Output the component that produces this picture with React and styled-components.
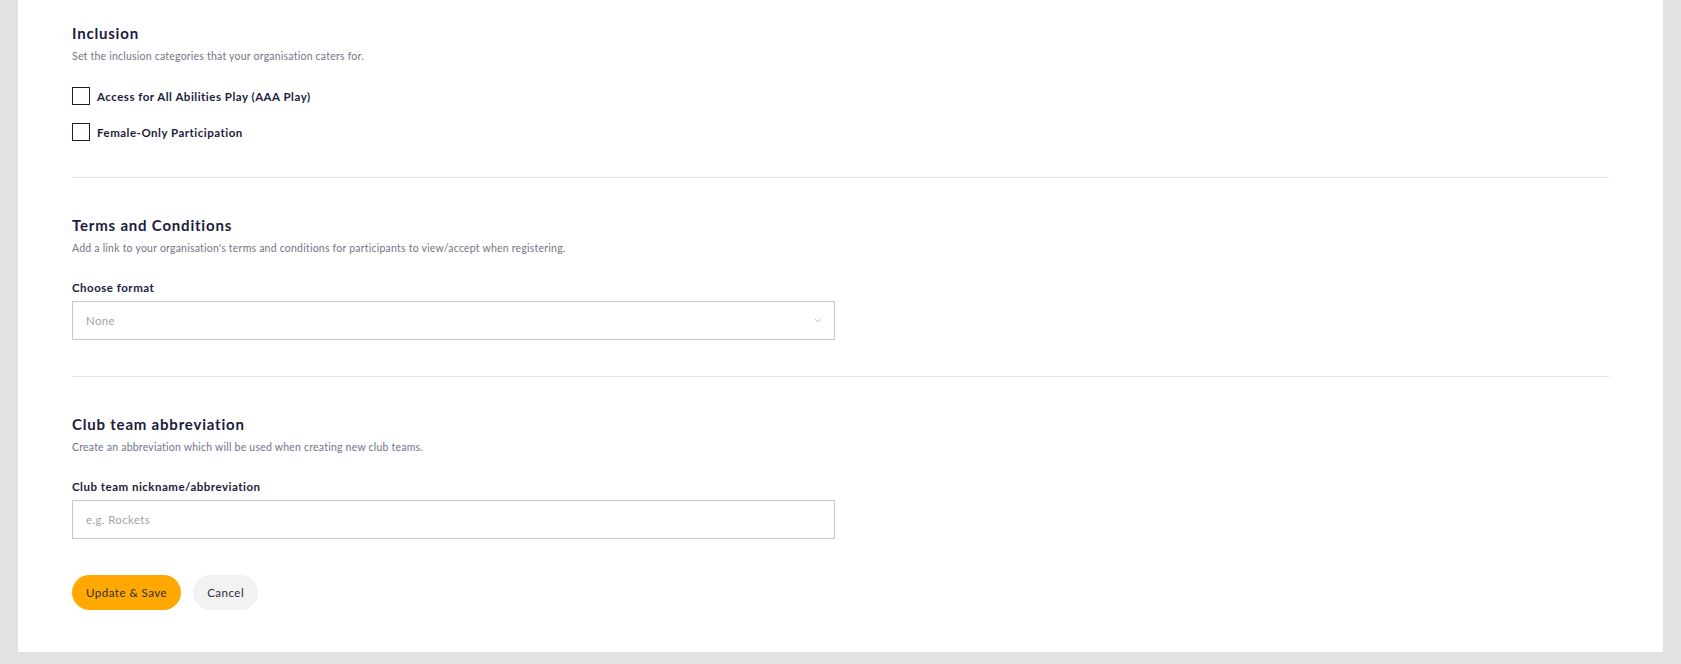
import React from 'react'
import styled, { createGlobalStyle } from 'styled-components'

const GlobalStyle = createGlobalStyle`
  body {
    margin: 0;
    background-color: #e2e2e2;
    font-family: Lato, "Open Sans", sans-serif;
  }
`

const Page = styled.div`
  height: 664px;
  overflow: hidden;
`

const Panel = styled.div`
  width: 1537px;
  margin-left: 18px;
  padding: 0 54px 42px 54px;
  background-color: #ffffff;
`

const Section = styled.section`
  padding-top: ${props => props.first ? '23px' : '37px'};
  padding-bottom: ${props => props.last ? '0' : '36px'};
  border-bottom: ${props => props.last ? 'none' : '1px solid #e4e4e4'};
`

const Heading = styled.h2`
  margin: 0;
  font-size: 15px;
  line-height: 20px;
  font-weight: 700;
  letter-spacing: 0.8px;
  color: #1b1c3c;
`

const Subtitle = styled.p`
  margin: 5px 0 0 0;
  font-size: 10.5px;
  line-height: 16px;
  color: #737488;
  letter-spacing: 0.22px;
`

const CheckList = styled.div`
  display: flex;
  flex-direction: column;
  gap: 18px;
  margin-top: 23px;
`

const CheckRow = styled.label`
  display: flex;
  align-items: center;
  gap: 7px;
  height: 18px;
  font-size: 11.5px;
  font-weight: 700;
  letter-spacing: 0.5px;
  color: #1b1c3c;
`

const Box = styled.span`
  box-sizing: border-box;
  width: 18px;
  height: 18px;
  border: 1.5px solid #1b1c3c;
  background: #ffffff;
`

const FieldLabel = styled.div`
  margin-top: 24px;
  font-size: 11.5px;
  line-height: 16px;
  font-weight: 700;
  letter-spacing: 0.5px;
  color: #1b1c3c;
`

const Field = styled.div`
  box-sizing: border-box;
  display: flex;
  align-items: center;
  justify-content: space-between;
  width: 763px;
  height: 39px;
  margin-top: 5px;
  padding: 0 12px 0 13px;
  border: 1px solid #c9c9c9;
  font-size: 11.5px;
  letter-spacing: 0.35px;
  color: #a3a3a3;
`

const Buttons = styled.div`
  display: flex;
  gap: 12px;
  margin-top: 36px;
`

const Button = styled.button`
  height: 35px;
  padding: 0 14px;
  border: none;
  border-radius: 18px;
  background-color: ${props => props.primary ? '#ffa800' : '#f2f2f2'};
  color: #2d2d3a;
  font-family: Lato, "Open Sans", sans-serif;
  font-size: 11.5px;
  letter-spacing: 0.5px;
`

const Chevron = () => (
  <svg width="8" height="5" viewBox="0 0 8 5" fill="none">
    <path d="M1 1l3 3 3-3" stroke="#c4c4c4" strokeWidth="1" />
  </svg>
)

export default function App() {
  return (
    <Page>
      <GlobalStyle />
      <Panel>
        <Section first>
          <Heading>Inclusion</Heading>
          <Subtitle>Set the inclusion categories that your organisation caters for.</Subtitle>
          <CheckList>
            <CheckRow><Box />Access for All Abilities Play (AAA Play)</CheckRow>
            <CheckRow><Box />Female-Only Participation</CheckRow>
          </CheckList>
        </Section>
        <Section>
          <Heading>Terms and Conditions</Heading>
          <Subtitle>Add a link to your organisation's terms and conditions for participants to view/accept when registering.</Subtitle>
          <FieldLabel>Choose format</FieldLabel>
          <Field>
            <span>None</span>
            <Chevron />
          </Field>
        </Section>
        <Section last>
          <Heading>Club team abbreviation</Heading>
          <Subtitle>Create an abbreviation which will be used when creating new club teams.</Subtitle>
          <FieldLabel>Club team nickname/abbreviation</FieldLabel>
          <Field>
            <span>e.g. Rockets</span>
          </Field>
          <Buttons>
            <Button primary>Update &amp; Save</Button>
            <Button>Cancel</Button>
          </Buttons>
        </Section>
      </Panel>
    </Page>
  )
}
